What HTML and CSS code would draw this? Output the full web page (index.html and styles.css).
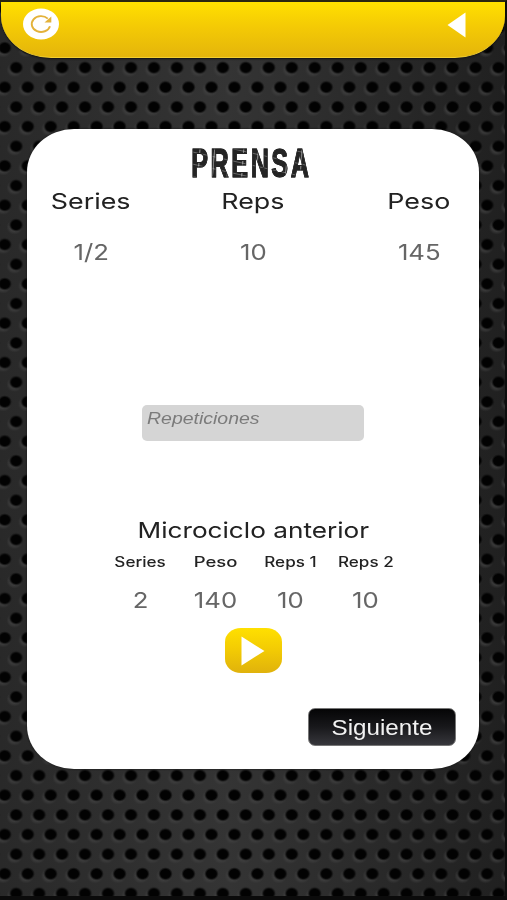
FILE: index.html
```html
<!DOCTYPE html>
<html lang="es">
<head>
  <meta charset="UTF-8" />
  <title>Prensa</title>
  <link rel="stylesheet" href="styles.css">
</head>
<body>
  <!-- Top bar -->
  <header id="topbar">
    <svg class="icon-reload" viewBox="0 0 36 32">
      <ellipse cx="18" cy="16" rx="18" ry="15.5" fill="#fff" />
      <path d="M24.8 10.6 A9.3 7.9 0 1 0 27 18.2" fill="none" stroke="#e3b23a" stroke-width="1.9" />
      <path d="M28.3 8.5 V14.5 H21.5 Z" fill="#e3b23a" />
    </svg>
    <svg class="icon-back" viewBox="0 0 19 26">
      <path d="M18.5 0.5 V25.5 L0.5 13 Z" fill="#fff" />
    </svg>
  </header>

  <!-- Exercise card -->
  <main id="card">
    <h1><span>PRENSA</span></h1>

    <div class="stats">
      <div class="stat"><span class="label">Series</span><span class="value">1/2</span></div>
      <div class="stat"><span class="label">Reps</span><span class="value">10</span></div>
      <div class="stat"><span class="label">Peso</span><span class="value">145</span></div>
    </div>

    <div class="reps-field"><span>Repeticiones</span></div>

    <h2><span>Microciclo anterior</span></h2>

    <div class="previous">
      <div class="stat"><span class="label">Series</span><span class="value">2</span></div>
      <div class="stat"><span class="label">Peso</span><span class="value">140</span></div>
      <div class="stat"><span class="label">Reps 1</span><span class="value">10</span></div>
      <div class="stat"><span class="label">Reps 2</span><span class="value">10</span></div>
    </div>

    <button class="play" aria-label="Play">
      <svg viewBox="0 0 24 30"><path d="M0.5 0.5 V29.5 L23.5 15 Z" fill="#fff" /></svg>
    </button>

    <button class="next"><span>Siguiente</span></button>
  </main>
</body>
</html>
```
FILE: styles.css
```css
* {
  margin: 0;
  padding: 0;
  box-sizing: border-box;
}

/* Perforated metal background */
body {
  width: 507px;
  height: 900px;
  overflow: hidden;
  font-family: Inter, "Liberation Sans", sans-serif;
  color: #222;
  border-top: 2px solid #29250f;
  border-right: 2px solid #0d0d0d;
  border-bottom: 4px solid #0b0b0b;
  background-color: #2c2c2c;
  background-image:
    radial-gradient(ellipse 7.2px 6.6px at 50% 50%, #020202 68%, transparent 100%),
    radial-gradient(ellipse 7.2px 6.6px at 50% 50%, #020202 68%, transparent 100%),
    radial-gradient(ellipse 8px 7.5px at 50% 50%, #424242 45%, transparent 100%),
    radial-gradient(ellipse 8px 7.5px at 50% 50%, #424242 45%, transparent 100%),
    linear-gradient(90deg, #292929, #343434 45%, #202020);
  background-size: 22.97px 39.33px, 22.97px 39.33px, 22.97px 39.33px, 22.97px 39.33px, 100% 100%;
  background-position: 4.6px 8.7px, 16.2px 28.3px, 3px 10.7px, 14.6px 30.3px, 0 0;
  background-origin: border-box;
  background-repeat: repeat;
}

/* Top bar */
#topbar {
  width: 504px;
  height: 56px;
  margin-left: 1px;
  padding: 6px 39px 0 22px;
  display: flex;
  justify-content: space-between;
  align-items: flex-start;
  background: linear-gradient(#ffe000, #f4ca05 45%, #e4b50b);
  border-bottom: 1px solid #f2cf31;
  border-radius: 0 0 50px 50px / 0 0 42px 42px;
  box-shadow: 0 1px 2px #111;
}
.icon-reload {
  width: 36px;
  height: 32px;
}
.icon-back {
  width: 19px;
  height: 26px;
  margin-top: 4px;
}

/* Card */
#card {
  width: 452px;
  height: 640px;
  margin: 71px 0 0 27px;
  padding-top: 14px;
  display: flex;
  flex-direction: column;
  align-items: center;
  background: #fff;
  border-radius: 47px / 43px;
  box-shadow: 0 0 2px #111;
}
#card span {
  display: block;
  white-space: nowrap;
}

h1 {
  height: 42px;
  margin-right: 3px;
  font: bold 40px/41px "Liberation Sans", sans-serif;
  letter-spacing: 4px;
}
/* worn stamp look */
h1 span {
  transform: scaleX(0.63);
  color: transparent;
  -webkit-text-stroke: 1px #242424;
  background:
    repeating-linear-gradient(97deg, transparent 0 13px, rgba(255, 255, 255, 0.4) 14px 15px, transparent 16px 23px),
    repeating-linear-gradient(8deg, transparent 0 7px, rgba(255, 255, 255, 0.3) 8px, transparent 9px 12px),
    #242424;
  -webkit-background-clip: text;
  background-clip: text;
}

.stats {
  width: 100%;
  display: grid;
  grid-template-columns: 128px 196px 136px;
}
.stat {
  display: flex;
  flex-direction: column;
  align-items: center;
}
.stat .label {
  height: 34px;
  font-size: 22px;
  line-height: 33px;
  transform: scaleX(1.22);
}
.stat .value {
  height: 34px;
  margin-top: 16px;
  font-size: 22px;
  line-height: 34px;
  color: #666;
  transform: scaleX(1.17);
}

.reps-field {
  width: 222px;
  height: 36px;
  margin-top: 136px;
  padding: 3px 5px;
  background: #d5d5d5;
  border-radius: 5px;
  font: italic 17px/22px "Liberation Sans", sans-serif;
  color: #7b7b7b;
}
.reps-field span {
  transform: scaleX(1.145);
  transform-origin: left;
}

h2 {
  height: 32px;
  margin-top: 73px;
  font-size: 22px;
  font-weight: normal;
  line-height: 33px;
}
h2 span {
  transform: scaleX(1.19);
}

.previous {
  display: grid;
  grid-template-columns: repeat(4, 75px);
}
.previous .label {
  height: 30px;
  font-size: 14px;
  font-weight: 500;
  line-height: 31px;
}
.previous .stat:nth-child(2) .label {
  transform: scaleX(1.32);
}
.previous .value {
  margin-top: 7px;
}

.play {
  width: 57px;
  height: 45px;
  margin-top: 11px;
  flex: none;
  display: flex;
  align-items: center;
  justify-content: center;
  border: none;
  border-radius: 16px / 14px;
  background: linear-gradient(#ffe000, #f2ca04 50%, #e0b20c);
}
.play svg {
  width: 24px;
  height: 30px;
}

.next {
  width: 148px;
  height: 38px;
  margin: 35px 23px 0 0;
  padding-top: 1px;
  flex: none;
  align-self: flex-end;
  border: 1px solid #777;
  border-radius: 7px;
  background: linear-gradient(#050506, #18181b 50%, #37373c);
  color: #f2f2f2;
  font: 22px/34px "Liberation Sans", sans-serif;
}
.next span {
  transform: scaleX(1.1);
}
```
